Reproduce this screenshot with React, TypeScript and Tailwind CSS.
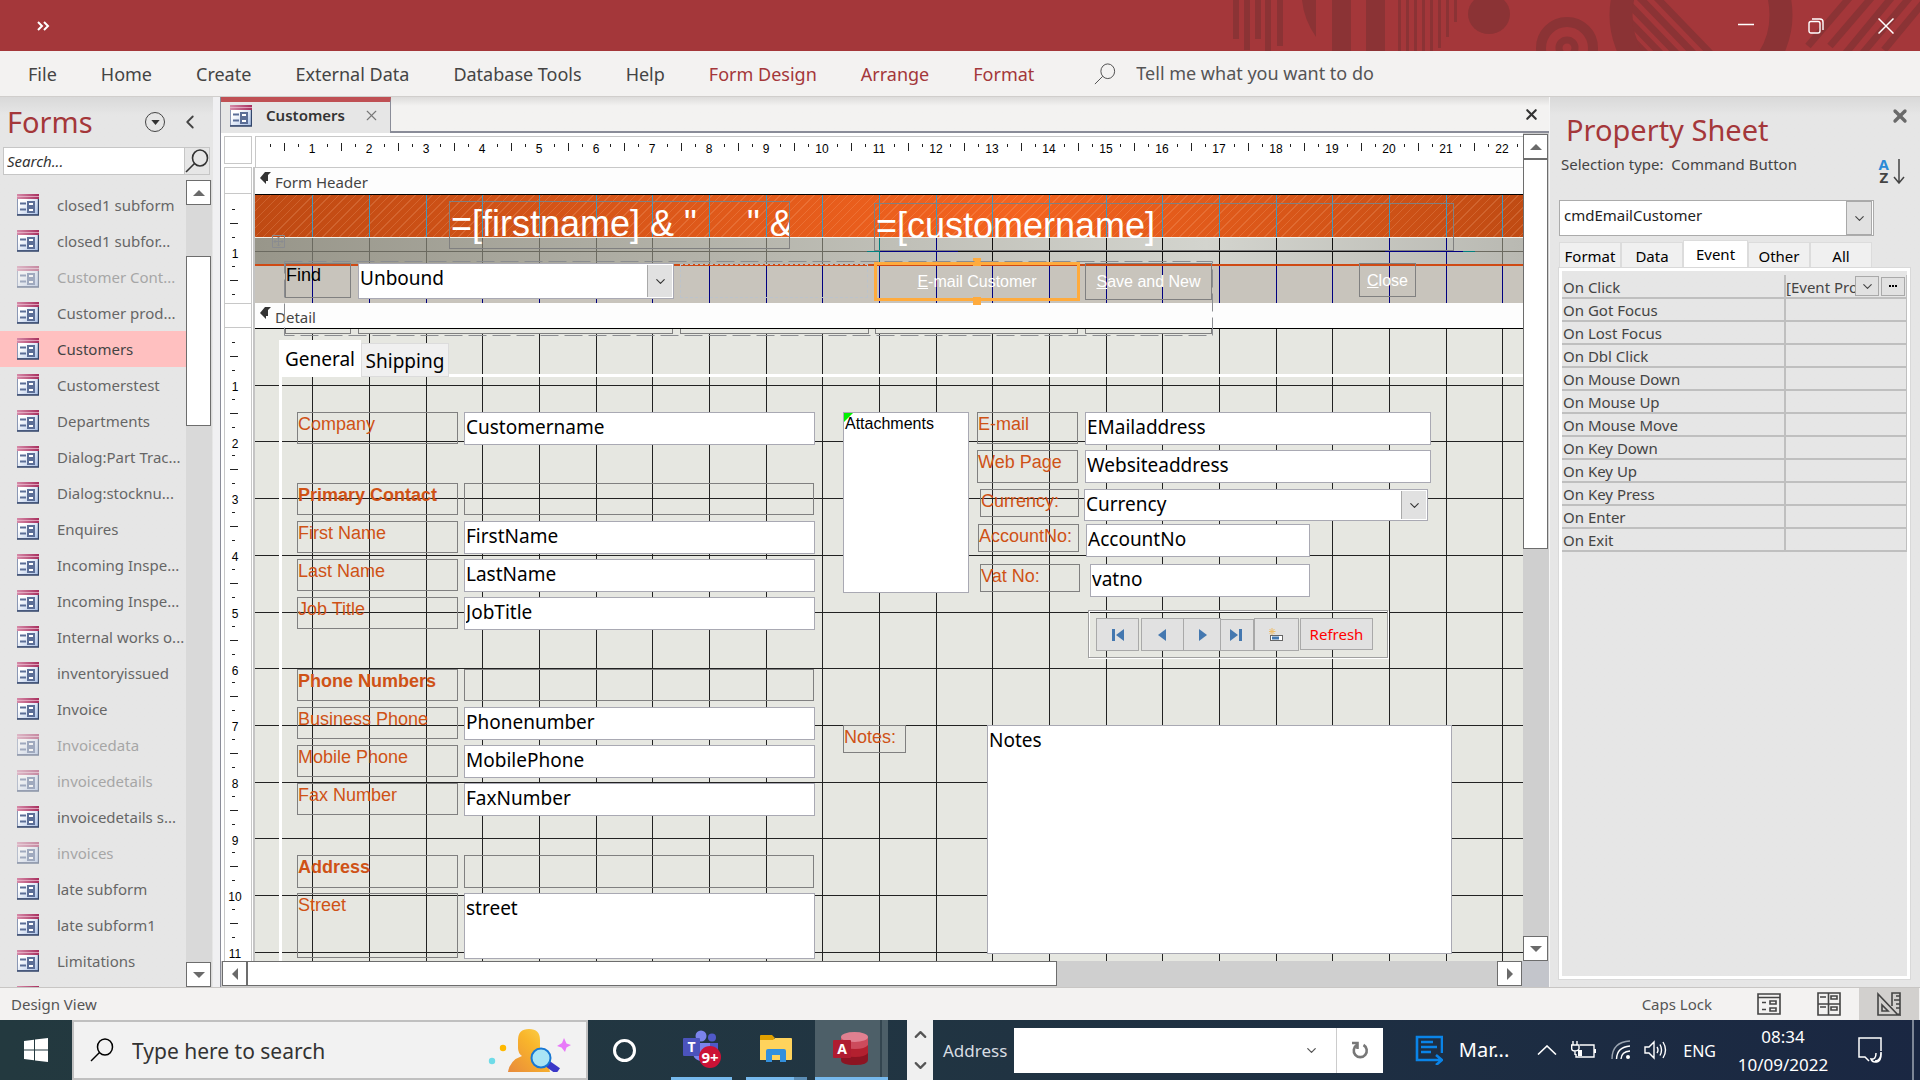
import { useState } from "react";
import type { ReactNode } from "react";
import { ChevronDown, ChevronLeft, ChevronUp, X } from "lucide-react";

// one centimetre on the design surface
const CM = 56.68;
const MARKS = Array.from({ length: 45 }, (_, i) => i + 1);

const menus = ["File", "Home", "Create", "External Data", "Database Tools", "Help"];
const designMenus = ["Form Design", "Arrange", "Format"];

const forms = [
  { name: "closed1 subform" },
  { name: "closed1 subfor..." },
  { name: "Customer Cont...", hidden: true },
  { name: "Customer prod..." },
  { name: "Customers" },
  { name: "Customerstest" },
  { name: "Departments" },
  { name: "Dialog:Part Trac..." },
  { name: "Dialog:stocknu..." },
  { name: "Enquires" },
  { name: "Incoming Inspe..." },
  { name: "Incoming Inspe..." },
  { name: "Internal works o..." },
  { name: "inventoryissued" },
  { name: "Invoice" },
  { name: "Invoicedata", hidden: true },
  { name: "invoicedetails", hidden: true },
  { name: "invoicedetails s..." },
  { name: "invoices", hidden: true },
  { name: "late subform" },
  { name: "late subform1" },
  { name: "Limitations" },
  { name: "" },
];

const events = [
  "On Click",
  "On Got Focus",
  "On Lost Focus",
  "On Dbl Click",
  "On Mouse Down",
  "On Mouse Up",
  "On Mouse Move",
  "On Key Down",
  "On Key Up",
  "On Key Press",
  "On Enter",
  "On Exit",
];

// controls of the detail section, measured from its top left corner
const labels = [
  { id: "company", text: "Company", x: 42, y: 83, w: 161, h: 32 },
  { id: "", text: "Primary Contact", x: 42, y: 154, w: 161, h: 32, bold: true },
  { id: "first", text: "First Name", x: 42, y: 192, w: 161, h: 32 },
  { id: "last", text: "Last Name", x: 42, y: 230, w: 161, h: 32 },
  { id: "job", text: "Job Title", x: 42, y: 268, w: 161, h: 32 },
  { id: "", text: "Phone Numbers", x: 42, y: 340, w: 161, h: 32, bold: true },
  { id: "business", text: "Business Phone", x: 42, y: 378, w: 161, h: 32 },
  { id: "mobile", text: "Mobile Phone", x: 42, y: 416, w: 161, h: 32 },
  { id: "fax", text: "Fax Number", x: 42, y: 454, w: 161, h: 32 },
  { id: "", text: "Address", x: 42, y: 526, w: 161, h: 33, bold: true },
  { id: "street", text: "Street", x: 42, y: 564, w: 161, h: 65 },
  { id: "email", text: "E-mail", x: 722, y: 83, w: 101, h: 32 },
  { id: "web", text: "Web Page", x: 722, y: 121, w: 101, h: 33 },
  { id: "currency", text: "Currency:", x: 725, y: 160, w: 99, h: 28 },
  { id: "account", text: "AccountNo:", x: 723, y: 195, w: 101, h: 28 },
  { id: "vat", text: "Vat No:", x: 725, y: 235, w: 100, h: 28 },
  { id: "notes", text: "Notes:", x: 588, y: 396, w: 63, h: 28 },
];

const fields = [
  { id: "company", text: "Customername", x: 209, y: 83, w: 351, h: 33 },
  { id: "first", text: "FirstName", x: 209, y: 192, w: 351, h: 33 },
  { id: "last", text: "LastName", x: 209, y: 230, w: 351, h: 33 },
  { id: "job", text: "JobTitle", x: 209, y: 268, w: 351, h: 33 },
  { id: "business", text: "Phonenumber", x: 209, y: 378, w: 351, h: 33 },
  { id: "mobile", text: "MobilePhone", x: 209, y: 416, w: 351, h: 33 },
  { id: "fax", text: "FaxNumber", x: 209, y: 454, w: 351, h: 33 },
  { id: "email", text: "EMailaddress", x: 830, y: 83, w: 346, h: 33 },
  { id: "web", text: "Websiteaddress", x: 830, y: 121, w: 346, h: 33 },
  { id: "account", text: "AccountNo", x: 831, y: 195, w: 224, h: 33 },
  { id: "vat", text: "vatno", x: 835, y: 235, w: 220, h: 33 },
];

const memos = [
  { id: "street", text: "street", x: 209, y: 564, w: 351, h: 66 },
  { id: "notes", text: "Notes", x: 732, y: 396, w: 465, h: 229 },
];

const emptyCells = [
  { x: 209, y: 154, w: 350, h: 32 },
  { x: 209, y: 340, w: 350, h: 32 },
  { x: 209, y: 526, w: 350, h: 33 },
];

// lower edge of the header layout that reaches into the detail section
const layoutFeet = [
  { x: 30, w: 66 },
  { x: 103, w: 315 },
  { x: 425, w: 189 },
  { x: 620, w: 203 },
  { x: 830, w: 127 },
];

const box = (o: { x: number; y: number; w: number; h: number }) => ({
  left: o.x,
  top: o.y,
  width: o.w,
  height: o.h,
});

const gridX = (n: number) => Math.round(n * CM + 0.5);
const gridY = (n: number) => Math.round(n * 56.7 - 1);

const FormIcon = ({ dim }: { dim?: boolean }) => (
  <svg viewBox="0 0 22 22" className={`w-[22px] h-[22px] shrink-0 ${dim ? "opacity-50" : ""}`}>
    <defs>
      <linearGradient id="formBody" x1="0" y1="0" x2="1" y2="1">
        <stop offset="0.3" stopColor="#ffffff" />
        <stop offset="1" stopColor="#a9c0e6" />
      </linearGradient>
      <linearGradient id="formTop" x1="0" y1="0" x2="1" y2="0">
        <stop offset="0" stopColor="#d68aa8" />
        <stop offset="1" stopColor="#a82f5e" />
      </linearGradient>
    </defs>
    <rect x="0.5" y="0.5" width="21" height="20" fill="url(#formBody)" stroke="#8a97b5" />
    <rect x="0" y="0" width="22" height="5" fill="url(#formTop)" />
    <path d="M0 2.5H22" stroke="#e9b8cb" strokeWidth="0.8" />
    <path d="M3 9.5H9M3 15.5H9" stroke="#5b6e97" strokeWidth="2" />
    <rect x="11" y="8" width="6" height="4" fill="#fff" stroke="#5b6e97" strokeWidth="2" />
    <rect x="11" y="14" width="6" height="4" fill="#fff" stroke="#5b6e97" strokeWidth="2" />
    <path d="M0 21H22M21.5 5V21" stroke="#33466b" strokeWidth="1.4" fill="none" />
  </svg>
);

const SearchIcon = ({ className }: { className: string }) => (
  <svg viewBox="0 0 24 24" className={className} fill="none" stroke="currentColor">
    <ellipse cx="15" cy="9" rx="7.5" ry="8" />
    <path d="M9.5 14.5L1 23" />
  </svg>
);

const Arrow = ({ d }: { d: string }) => (
  <svg viewBox="0 0 12 12" className="w-3 h-3" fill="#6a6a6a">
    <path d={d} />
  </svg>
);

const ScrollButton = ({ label, d }: { label: string; d: string }) => (
  <button
    aria-label={label}
    className="w-[25px] h-[25px] shrink-0 flex items-center justify-center bg-white border border-[#6d6d6d]"
  >
    <Arrow d={d} />
  </button>
);

const UP = "M0 9L6 3L12 9Z";
const DOWN = "M0 3L12 3L6 9Z";
const LEFT = "M9 0V12L3 6Z";
const RIGHT = "M3 0V12L9 6Z";

const TitleBar = () => (
  <header className="relative h-[51px] shrink-0 bg-[#a4373a] flex items-center justify-between text-white">
    <svg viewBox="0 0 700 51" className="absolute right-0 top-0 w-[700px] h-[51px]" fill="#8b3335">
      <defs>
        <clipPath id="lens">
          <circle cx="481" cy="15" r="69" />
        </clipPath>
      </defs>
      <path d="M13 0h6v39h-6zM24 0h6v50h-6zM35 0h6v39h-6zM45 0h6v51h-6zM57 0h6v46h-6z" />
      <path d="M82 0H96V37Q84 20 82 0ZM112 0h19v51h-19zM146 0h19v51h-19z" />
      <path d="M178 0h3v51h-3zM186 0h3v51h-3zM194 0h3v51h-3zM202 0h3v51h-3zM210 0h3v51h-3zM218 0h3v48h-3zM226 0h3v37h-3zM234 0h3v22h-3z" />
      <ellipse cx="269" cy="14" rx="21" ry="20" />
      <g fill="none" stroke="#8b3335">
        <circle cx="347" cy="48" r="26" strokeWidth="10" />
        <circle cx="347" cy="48" r="8" strokeWidth="7" />
        <circle cx="481" cy="15" r="80" strokeWidth="23" />
        <g strokeWidth="7" clipPath="url(#lens)">
          <path d="M436 -3L491 54M419 -3L474 54M402 -3L457 54M386 -3L441 54M371 -3L426 54" />
        </g>
        <g strokeWidth="7">
          <path d="M588 46L630 -3M610 46L652 -3M625 54L672 -3M642 54L690 -3M664 50L708 -3" />
        </g>
      </g>
    </svg>
    <button aria-label="More commands" className="ml-[35px] h-full">
      <svg viewBox="0 0 16 12" className="w-4 h-3" fill="none" stroke="white" strokeWidth="2">
        <path d="M3 2L7 6L3 10M9 2L13 6L9 10" />
      </svg>
    </button>
    <div className="relative flex items-center gap-[54px] pr-[26px]">
      <button aria-label="Minimize">
        <svg viewBox="0 0 16 16" className="w-4 h-4" fill="none" stroke="white" strokeWidth="1.5">
          <path d="M0 6.5H16" />
        </svg>
      </button>
      <button aria-label="Restore">
        <svg viewBox="0 0 16 16" className="w-4 h-4" fill="none" stroke="white" strokeWidth="1.4">
          <rect x="1" y="3.5" width="11" height="11.5" rx="2" />
          <path d="M4 1H12Q15 1 15 4V12" />
        </svg>
      </button>
      <button aria-label="Close window">
        <svg viewBox="0 0 16 16" className="w-4 h-4" fill="none" stroke="white" strokeWidth="1.5">
          <path d="M0.5 0.5L15.5 15.5M15.5 0.5L0.5 15.5" />
        </svg>
      </button>
    </div>
  </header>
);

const Ribbon = () => (
  <nav className="h-[46px] shrink-0 bg-[#f3f2f1] border-b border-[#d0cecc] flex items-center gap-11 pl-7 pt-[2px] text-[18px] text-[#444444]">
    {menus.map((m) => (
      <button key={m}>{m}</button>
    ))}
    {designMenus.map((m) => (
      <button key={m} className="text-[#a4373a]">
        {m}
      </button>
    ))}
    <label className="flex flex-1 items-center gap-5 pl-4 pb-[2px]">
      <SearchIcon className="w-[22px] h-[22px]" />
      <input
        placeholder="Tell me what you want to do"
        className="flex-1 bg-transparent outline-none placeholder:text-[#555555]"
      />
    </label>
  </nav>
);

const NavigationPane = () => {
  const [selected, setSelected] = useState("Customers");

  return (
    <aside className="w-[213px] shrink-0 flex flex-col bg-gradient-to-b from-[#d9d9d9] to-[#e6e6e6] to-2%">
      <div className="flex items-center h-[50px] pl-[7px]">
        <h2 className="flex-1 text-[29px] text-[#a4373a]">Forms</h2>
        <button
          aria-label="Choose object list"
          className="w-5 h-5 mr-[14px] rounded-full border border-[#444444] flex items-center justify-center"
        >
          <svg viewBox="0 0 10 6" className="w-[9px] h-[5px]" fill="#333333">
            <path d="M0 0H10L5 6Z" />
          </svg>
        </button>
        <button aria-label="Collapse pane" className="mr-3 text-[#444444]">
          <ChevronLeft size={22} strokeWidth={2} />
        </button>
      </div>
      <div className="flex h-7 ml-[3px] w-[207px] border border-[#c6c6c6]">
        <input
          aria-label="Search forms"
          placeholder="Search..."
          className="w-[181px] bg-white pl-[3px] text-[15px] italic outline-none placeholder:text-[#333333] border-r border-[#c6c6c6]"
        />
        <button aria-label="Search" className="flex-1 text-[#333333]">
          <SearchIcon className="w-6 h-6 stroke-[1.6]" />
        </button>
      </div>
      <div className="flex flex-1 min-h-0 mt-[5px]">
        <ul className="flex-1 min-w-0 overflow-hidden pt-[7px]">
          {forms.map((f, i) => (
            <li key={i}>
              <button
                onClick={() => setSelected(f.name)}
                className={`flex items-center gap-[18px] w-full h-9 pl-[17px] text-[15px] whitespace-nowrap ${
                  selected === f.name ? "bg-[#ffc0c0] text-[#444444]" : f.hidden ? "text-[#a6a6a6]" : "text-[#666666]"
                }`}
              >
                <FormIcon dim={f.hidden} />
                {f.name}
              </button>
            </li>
          ))}
        </ul>
        <div className="w-[26px] flex flex-col bg-[#d9d9d9] mr-px">
          <ScrollButton label="Scroll forms up" d={UP} />
          <div className="h-[51px]" />
          <div className="w-[25px] h-[170px] bg-white border border-[#6d6d6d]" />
          <div className="flex-1" />
          <ScrollButton label="Scroll forms down" d={DOWN} />
        </div>
      </div>
    </aside>
  );
};

const HorizontalRuler = () => (
  <div className="flex h-[34px] shrink-0 gap-[6px] pl-[3px] pt-[3px] bg-white">
    <div className="w-7 h-7 border border-[#c8c8c8]" />
    <svg className="flex-1 h-8 border border-r-0 border-[#c8c8c8] -ml-[3px]">
      {MARKS.map((n) => {
        const x = gridX(n) - 1;
        return (
          <g key={n}>
            {n <= 22 && (
              <text x={x} y="16" textAnchor="middle" className="text-[12px] font-['Liberation_Sans',sans-serif]">
                {n}
              </text>
            )}
            <path
              d={`M${x - 42} 7v3M${x - 28} 6v8M${x - 14} 7v3`}
              transform="translate(0.5 0)"
              stroke="#222222"
            />
          </g>
        );
      })}
    </svg>
  </div>
);

// vertical ruler that runs beside one section, numbered up to its last full centimetre
const SectionRuler = ({ first, last, className }: { first: number; last: number; className: string }) => (
  <svg className={`w-7 block ${className}`}>
    {MARKS.slice(0, 20).map((n) => {
      const y = first + Math.round((n - 1) * 56.7);
      return (
        <g key={n}>
          <path d={`M7 ${y - 43.5}h3M5 ${y - 29.5}h8M7 ${y - 15.5}h3`} stroke="#222222" />
          {n <= last && (
            <text x="10" y={y + 5} textAnchor="middle" className="text-[12px] font-['Liberation_Sans',sans-serif]">
              {n}
            </text>
          )}
        </g>
      );
    })}
  </svg>
);

const SectionBar = ({ title, className }: { title: string; className: string }) => (
  <div className={`flex items-center bg-[#fdfdfd] border-b border-black pl-[5px] text-[15px] leading-[22px] text-[#444444] ${className}`}>
    <svg viewBox="0 0 12 12" className="w-3 h-3 mr-[3px] -mt-2" fill="#333333">
      <path d="M0 6L5 0H11L8 3V9H6V12Z" />
    </svg>
    {title}
  </div>
);

const HeaderGrid = () => (
  <svg className="absolute inset-0 w-full h-full" shapeRendering="crispEdges">
    {MARKS.map((n) => {
      const x = gridX(n);
      const middle = n < 11 || n > 21 ? "#6b6a60" : n === 11 ? "#008080" : n > 12 && n < 20 ? "#111111" : "#000080";
      return (
        <g key={n}>
          <path d={`M${x} 0V42`} stroke="#3f97c0" />
          <path d={`M${x} 43V69`} stroke={middle} />
          <path d={`M${x} 71V108`} stroke="#000080" />
        </g>
      );
    })}
    <path d="M0 56.5H612M1220 56.5H3000" stroke="#6b6a60" />
    <path d="M612 56.5H625M1208 56.5H1220" stroke="#008080" />
    <path d="M625 56.5H703M1130 56.5H1208" stroke="#000080" />
    <path d="M703 56.5H1130" stroke="#111111" />
  </svg>
);

const DetailGrid = () => (
  <svg className="absolute inset-0 w-full h-full" shapeRendering="crispEdges" stroke="#222222">
    {MARKS.map((n) => (
      <path key={n} d={`M${gridX(n)} 0V2000`} />
    ))}
    {MARKS.map((n) => (
      <path key={n} d={`M0 ${gridY(n)}.5H3000`} />
    ))}
  </svg>
);

const HeaderSection = () => (
  <div className="relative h-[108px] shrink-0 overflow-hidden bg-[#c8c4bc]">
    <div className="h-[42px] bg-[repeating-linear-gradient(135deg,transparent_0_5px,rgba(255,190,150,0.2)_5px_6px),linear-gradient(90deg,#bf4a13,#f4631f_60%,#c04b13)]" />
    <div className="h-px bg-[#f4efe6]" />
    <div className="h-[26px] bg-gradient-to-r from-[#98968a] via-[#d3d4ce] via-75% to-[#b9b9b2]" />
    <div className="h-[2px] bg-[#cf4a14]" />
    <HeaderGrid />
    <div className="absolute left-[194px] top-[6px] w-[341px] h-[48px] overflow-hidden whitespace-pre border border-[#808080] pl-px pt-[2px] text-[36px] leading-[40px] text-white font-['Liberation_Sans',sans-serif]">
      {'=[firstname] & "     " &'}
    </div>
    <div className="absolute left-[619px] top-[8px] w-[580px] h-[48px] border border-[#808080] pl-px pt-[2px] text-[36px] leading-[40px] text-white font-['Liberation_Sans',sans-serif]">
      =[customername]
    </div>
    <svg viewBox="0 0 13 13" className="absolute left-[17px] top-[40px] w-[13px] h-[13px]" fill="none" stroke="#8a8c90">
      <path d="M0.5 0.5H12.5V12.5H0.5ZM6.5 2V11M2 6.5H11M5 3.5L6.5 2L8 3.5M5 9.5L6.5 11L8 9.5M3.5 5L2 6.5L3.5 8M9.5 5L11 6.5L9.5 8" />
    </svg>
    <label
      htmlFor="find"
      className="absolute left-[30px] top-[68px] w-[66px] h-[35px] border border-[#808080] text-[18px] leading-[22px] text-black font-['Liberation_Sans',sans-serif]"
    >
      Find
    </label>
    <div className="absolute left-[103px] top-[68px] w-[316px] h-9">
      <select id="find" className="w-full h-full appearance-none bg-white border border-[#a9a9b3] pl-px pb-[6px] text-[19px]">
        <option>Unbound</option>
      </select>
      <DropMark />
    </div>
    <div className="absolute left-[425px] top-[69px] w-[188px] h-[34px] border border-dashed border-[#bcc3ca]" />
    <button className="absolute left-[619px] top-[67px] w-[206px] h-[39px] border-[3px] border-[#ffab3d] pt-px text-[16px] text-white font-['Liberation_Sans',sans-serif]">
      <u>E</u>-mail Customer
    </button>
    <div className="absolute left-[718px] top-[63px] w-2 h-2 bg-[#ffab3d]" />
    <button className="absolute left-[830px] top-[68px] w-[127px] h-[37px] border border-[#808080] pt-px text-[16px] text-white font-['Liberation_Sans',sans-serif]">
      <u>S</u>ave and New
    </button>
    <button className="absolute left-[1104px] top-[68px] w-[57px] h-[34px] border border-[#808080] pt-px text-[16px] text-white font-['Liberation_Sans',sans-serif]">
      <u>C</u>lose
    </button>
  </div>
);

const DropMark = () => (
  <span className="absolute right-[2px] top-[2px] bottom-[2px] w-[25px] bg-[#e1e1e1] border-l border-[#a9a9a9] flex items-center justify-center pointer-events-none">
    <ChevronDown size={15} strokeWidth={1.8} color="#333333" />
  </span>
);

const RecordButton = ({ label, o, children }: { label: string; o: any; children: ReactNode }) => (
  <button
    aria-label={label}
    className="absolute flex items-center justify-center bg-[#e1e1e1] border border-[#a9a9a9] text-[15px] text-[#ff0000]"
    style={box(o)}
  >
    {children}
  </button>
);

const RecordIcon = ({ d }: { d: string }) => (
  <svg viewBox="0 0 14 12" className="w-[14px] h-3" fill="#4478b0">
    <path d={d} />
  </svg>
);

const DetailSection = () => (
  <div className="relative flex-1 min-h-0 overflow-hidden bg-[#e6e7e1]">
    <DetailGrid />
    {layoutFeet.map((f) => (
      <div
        key={f.x}
        className="absolute top-0 h-[5px] border border-t-0 border-[#808080] bg-[#e6e7e1]"
        style={{ left: f.x, width: f.w }}
      />
    ))}

    {/* tab control */}
    <div className="absolute left-[24px] top-[45px] w-[3000px] h-[2000px] border-t-[3px] border-l-[3px] border-white" />
    <div className="absolute left-[24px] top-[11px] flex items-start text-[19px] leading-[26px] text-black">
      <button className="w-[82px] h-[37px] bg-white">General</button>
      <button className="w-[88px] h-[34px] mt-[3px] pt-px bg-[#f0f0f0] border border-[#dcdcdc]">Shipping</button>
    </div>

    {labels.map((l) => (
      <label
        key={l.text}
        htmlFor={l.id || undefined}
        className={`absolute border border-[#808080] whitespace-nowrap text-[18px] leading-[22px] text-[#cf5216] font-['Liberation_Sans',sans-serif] ${
          l.bold ? "font-bold" : ""
        }`}
        style={box(l)}
      >
        {l.text}
      </label>
    ))}
    {emptyCells.map((c) => (
      <div key={c.y} className="absolute border border-[#808080]" style={box(c)} />
    ))}
    {fields.map((f) => (
      <input
        key={f.id}
        id={f.id}
        defaultValue={f.text}
        className="absolute bg-white border border-[#a9a9b3] pl-px pb-[3px] text-[19px] text-black"
        style={box(f)}
      />
    ))}
    {memos.map((m) => (
      <textarea
        key={m.id}
        id={m.id}
        defaultValue={m.text}
        className="absolute resize-none bg-white border border-[#a9a9b3] pl-px text-[19px] leading-[28px] text-black"
        style={box(m)}
      />
    ))}
    <div className="absolute left-[829px] top-[160px] w-[344px] h-8">
      <select
        id="currency"
        className="w-full h-full appearance-none bg-white border border-[#a9a9b3] pl-px pb-[2px] text-[19px] text-black"
      >
        <option>Currency</option>
      </select>
      <DropMark />
    </div>

    <div className="absolute left-[588px] top-[83px] w-[126px] h-[181px] bg-white border border-[#a9a9b3] pl-px text-[16px] leading-[22px] text-black font-['Liberation_Sans',sans-serif]">
      <svg viewBox="0 0 9 9" className="absolute left-0 top-0 w-[9px] h-[9px]" fill="#00f000">
        <path d="M0 0H9L0 9Z" />
      </svg>
      <span className="relative">Attachments</span>
    </div>

    {/* record navigation */}
    <div className="absolute left-[833px] top-[281px] w-[300px] h-[48px] border border-[#a0a0a0] shadow-[1px_1px_0_#ffffff,inset_1px_1px_0_#ffffff]" />
    <RecordButton label="First record" o={{ x: 841, y: 289, w: 43, h: 33 }}>
      <RecordIcon d="M1 0H4V12H1ZM13 0V12L5 6Z" />
    </RecordButton>
    <RecordButton label="Previous record" o={{ x: 886, y: 289, w: 43, h: 33 }}>
      <RecordIcon d="M10 0V12L2 6Z" />
    </RecordButton>
    <RecordButton label="Next record" o={{ x: 928, y: 289, w: 38, h: 33 }}>
      <RecordIcon d="M4 0V12L12 6Z" />
    </RecordButton>
    <RecordButton label="Last record" o={{ x: 965, y: 290, w: 34, h: 32 }}>
      <RecordIcon d="M0 0V12L8 6ZM9 0H12V12H9Z" />
    </RecordButton>
    <RecordButton label="New record" o={{ x: 999, y: 289, w: 45, h: 33 }}>
      <svg viewBox="0 0 16 14" className="w-4 h-[14px]" fill="none">
        <path d="M3 0V7M-0.5 3.5H6.5M0.5 1L5.5 6M5.5 1L0.5 6" stroke="#eebd6b" />
        <rect x="1.5" y="7.5" width="12" height="5" fill="#ffffff" stroke="#666666" />
        <path d="M3 10H10" stroke="#4478b0" strokeWidth="3" />
      </svg>
    </RecordButton>
    <RecordButton label="Refresh" o={{ x: 1045, y: 289, w: 73, h: 32 }}>
      Refresh
    </RecordButton>
  </div>
);

const FormDesigner = () => (
  <main className="flex-1 min-w-0 flex flex-col border-l border-[#8a8c98] bg-white">
    <div className="flex h-9 shrink-0 bg-gradient-to-b from-[#dddcdb] to-[#f3f2f1] to-25%">
      <div className="flex items-center w-[170px] pl-[9px] pb-1 bg-[#e6e6e6] border-t-[5px] border-t-[#bf5054] border-r border-r-[#8a8c98]">
        <FormIcon />
        <span className="pl-[14px] text-[15px] font-semibold text-[#333333]">Customers</span>
        <button aria-label="Close Customers" className="pl-[18px] text-[#777777]">
          <X size={17} strokeWidth={1.6} />
        </button>
      </div>
      <div className="flex flex-1 items-center justify-end pr-[9px] border-b-2 border-[#8a8c98]">
        <button aria-label="Close designer" className="text-[#333333]">
          <X size={17} strokeWidth={3} />
        </button>
      </div>
    </div>

    <div className="flex flex-1 min-h-0">
      <div className="flex-1 min-w-0 flex flex-col">
        <HorizontalRuler />
        <div className="flex flex-1 min-h-0">
          <div className="flex flex-col w-[34px] shrink-0 pl-[3px] border-r-2 border-[#c4c4c4] overflow-hidden">
            <div className="w-7 h-[27px] shrink-0 border border-[#c8c8c8]" />
            <SectionRuler first={59} last={1} className="h-[109px] shrink-0 border-x border-[#c8c8c8]" />
            <div className="w-7 h-[25px] shrink-0 border border-[#c8c8c8]" />
            <SectionRuler first={58} last={11} className="flex-1 min-h-0 border-x border-[#c8c8c8]" />
          </div>
          <div className="relative flex-1 min-w-0 flex flex-col overflow-hidden">
            <SectionBar title="Form Header" className="h-7 pt-[2px] shrink-0 border-t border-t-[#c8c8c8]" />
            <HeaderSection />
            <SectionBar title="Detail" className="h-[26px] pt-[2px] shrink-0" />
            <DetailSection />
            {/* outline of the selected layout, drawn across both sections */}
            <svg
              viewBox="0 0 929 75"
              className="absolute left-[29px] top-[94px] w-[929px] h-[75px] pointer-events-none"
              fill="none"
              stroke="#8a8c90"
              strokeDasharray="18 6"
            >
              <path d="M0.5 0.5H928.5V74.5H0.5Z" />
            </svg>
            <div className="absolute left-[718px] top-[130px] w-2 h-2 bg-[#ffab3d]" />
          </div>
        </div>
      </div>
      <div className="flex flex-col w-[26px] shrink-0 pt-px bg-[#cfcfcf]">
        <ScrollButton label="Scroll up" d={UP} />
        <div className="w-[25px] h-[390px] bg-white border border-[#6d6d6d]" />
        <div className="flex-1" />
        <ScrollButton label="Scroll down" d={DOWN} />
      </div>
    </div>

    <div className="flex h-[26px] shrink-0 bg-[#cfcfcf] pl-px">
      <ScrollButton label="Scroll left" d={LEFT} />
      <div className="w-[810px] h-[25px] bg-white border border-[#6d6d6d]" />
      <div className="flex-1" />
      <ScrollButton label="Scroll right" d={RIGHT} />
      <div className="w-[27px] bg-[#c3c5cb]" />
    </div>
  </main>
);

const PropertySheet = () => {
  const [tab, setTab] = useState("Event");

  return (
    <aside className="w-[371px] shrink-0 flex flex-col bg-gradient-to-b from-[#d9d9d9] to-[#e6e6e6] to-2% border-l border-[#f5f5f5] pl-[9px] pr-[10px] pb-2 text-[15px] text-[#444444]">
      <div className="flex items-start justify-between pt-[9px] h-[57px]">
        <h2 className="pl-[7px] pt-1 text-[29px] leading-[40px] text-[#a4373a]">Property Sheet</h2>
        <button aria-label="Close property sheet" className="text-[#6a6a6a]">
          <X size={20} strokeWidth={4} />
        </button>
      </div>
      <div className="flex justify-between h-[46px] pr-[5px]">
        <p className="pl-[2px] leading-[21px] whitespace-pre">Selection type:  Command Button</p>
        <button aria-label="Sort" className="flex h-[26px] mt-1 gap-1">
          <span className="flex flex-col text-[15px] leading-[13px] font-bold">
            <span className="text-[#2b8ad6]">A</span>
            <span>Z</span>
          </span>
          <svg viewBox="0 0 12 26" className="w-3 h-[26px]" fill="none" stroke="#444444" strokeWidth="1.5">
            <path d="M6 1V25M1 19L6 25L11 19" />
          </svg>
        </button>
      </div>
      <div className="relative w-[315px] h-9 shrink-0">
        <select
          aria-label="Selected control"
          className="w-full h-full appearance-none bg-white border border-[#ababab] pl-1 pb-[6px] text-[15px] text-[#222222]"
        >
          <option>cmdEmailCustomer</option>
        </select>
        <span className="absolute right-[2px] top-[1px] bottom-[1px] w-[26px] bg-[#e1e1e1] border border-[#a9a9a9] flex items-center justify-center pointer-events-none">
          <ChevronDown size={15} strokeWidth={1.8} />
        </span>
      </div>
      <div className="flex items-end h-8 shrink-0 text-black">
        {["Format", "Data", "Event", "Other", "All"].map((t) => (
          <button
            key={t}
            onClick={() => setTab(t)}
            className={`border border-b-0 border-[#dcdcdc] ${
              t === tab ? "w-[65px] h-[28px] bg-white" : "w-[62px] h-[26px] pt-px bg-[#f0f0f0]"
            }`}
          >
            {t}
          </button>
        ))}
      </div>
      <div className="flex-1 border-[3px] border-white pt-1 shadow-[0_0_0_1px_#d9d9d9]">
        <table className="w-full table-fixed border-collapse">
          <tbody>
            {events.map((e) => (
              <tr key={e} className="h-[23px] border-b-2 border-[#bfbfbf]">
                <th scope="row" className="w-[223px] p-0 pt-px pl-px border-r-2 border-[#bfbfbf] text-left font-normal leading-[20px]">
                  {e}
                </th>
                <td className="p-0 border-r border-[#bfbfbf]">
                  {e === "On Click" && (
                    <div className="flex items-center h-[21px] gap-[2px] pr-px">
                      <span className="flex-1 overflow-hidden whitespace-nowrap pt-px leading-[20px]">[Event Procedure]</span>
                      <button
                        aria-label="Choose event handler"
                        className="w-[24px] h-[20px] -ml-[2px] shrink-0 border border-[#a9a9a9] bg-[#e1e1e1] flex items-center justify-center"
                      >
                        <ChevronDown size={15} strokeWidth={1.8} />
                      </button>
                      <button
                        aria-label="Build"
                        className="w-[24px] h-[19px] shrink-0 border border-[#a9a9a9] bg-[#e1e1e1] flex items-center justify-center gap-px"
                      >
                        <i className="w-[2px] h-[2px] bg-black" />
                        <i className="w-[2px] h-[2px] bg-black" />
                        <i className="w-[2px] h-[2px] bg-black" />
                      </button>
                    </div>
                  )}
                </td>
              </tr>
            ))}
          </tbody>
        </table>
      </div>
    </aside>
  );
};

const StatusBar = () => (
  <footer className="h-[33px] shrink-0 flex items-center border-t border-[#c8c6c4] bg-[#f3f2f1] pl-[11px] text-[15px] text-[#555555]">
    <span className="flex-1">Design View</span>
    <span className="pr-[27px]">Caps Lock</span>
    <button aria-label="Form view" className="w-[60px] h-full flex items-center justify-center">
      <svg viewBox="0 0 24 22" className="w-6 h-[22px]" fill="none" stroke="#444444" strokeWidth="1.6">
        <path d="M1 1H23V21H1ZM1 4.5H23M5 9.5H9M5 16.5H9" />
        <path d="M13 8H19V11H13ZM13 15H19V18H13Z" />
      </svg>
    </button>
    <button aria-label="Layout view" className="w-[60px] h-full flex items-center justify-center">
      <svg viewBox="0 0 24 24" className="w-6 h-6" fill="none" stroke="#444444" strokeWidth="1.6">
        <path d="M1 1H23V23H1ZM1 12H23M11.5 1V23M3 5H9M3 15H9" />
        <path d="M14 4H20V7H14ZM14 15H20V18H14Z" />
      </svg>
    </button>
    <button aria-label="Design view" className="w-[60px] h-full mr-px flex items-center justify-center bg-[#d2d0ce]">
      <svg viewBox="0 0 24 24" className="w-6 h-6" fill="none" stroke="#444444" strokeWidth="1.6">
        <path d="M1 2V23H21ZM5 13V19H11Z" />
        <path d="M15 14V1H23V23L21 22M23 4H19M23 8H17M23 12H19M23 16H19" />
      </svg>
    </button>
  </footer>
);

const Taskbar = () => (
  <footer className="h-[60px] shrink-0 flex bg-gradient-to-r from-[#23393f] via-[#213542] via-45% to-[#1a2742] text-white">
    <button aria-label="Start" className="w-[72px] shrink-0 flex items-center justify-center">
      <svg viewBox="0 0 24 24" className="w-6 h-6" fill="white">
        <path d="M0 3L10 1.7V11.4H0ZM11 1.5L24 0V11.4H11ZM0 12.5H10V22.3L0 21ZM11 12.5H24V24L11 22.4Z" />
      </svg>
    </button>
    <label className="w-[516px] shrink-0 flex items-center pl-4 gap-[18px] border-2 border-[#c0c0c0] bg-[#f2f2f2] text-black">
      <SearchIcon className="w-6 h-6 stroke-[1.5]" />
      <input
        placeholder="Type here to search"
        className="flex-1 bg-transparent pt-1 text-[21px] outline-none placeholder:text-[#333333]"
      />
      <svg viewBox="0 0 84 44" className="w-[84px] h-11 mr-[14px]">
        <defs>
          <linearGradient id="person" x1="0" y1="1" x2="1" y2="0">
            <stop offset="0" stopColor="#e88a3c" />
            <stop offset="0.6" stopColor="#f9b52b" />
            <stop offset="1" stopColor="#fbd64e" />
          </linearGradient>
        </defs>
        <circle cx="15" cy="20" r="3.2" fill="#ffb900" />
        <circle cx="4" cy="33" r="3.2" fill="#6fdbe8" />
        <path d="M30 12Q30 1 41 1Q52 1 52 12V20Q52 25 48 28Q60 32 62 44H20Q22 32 34 28Q30 25 30 20Z" fill="url(#person)" />
        <path d="M60 36L70 43" stroke="#3a37c8" strokeWidth="7" />
        <circle cx="53" cy="30" r="9.5" fill="#a9e4f5" stroke="#1778d4" strokeWidth="2" />
        <path d="M76 10L78.5 15.5L83 17L78.5 19.5L77 24L73.5 19.5L69 18L74 15Z" fill="#e879f9" />
      </svg>
    </label>
    <button aria-label="Cortana" className="w-[72px] shrink-0 flex items-center justify-center">
      <span className="w-[23px] h-[23px] rounded-full border-[3px] border-white" />
    </button>
    <button aria-label="Teams" className="w-[61px] shrink-0 ml-[11px] flex items-center justify-center border-b-[3px] border-[#76b9ed]">
      <svg viewBox="0 0 40 38" className="w-10 h-[38px]">
        <circle cx="19" cy="6" r="5.5" fill="#7b83eb" />
        <circle cx="30" cy="7.5" r="4" fill="#5059c9" />
        <path d="M11 13H36V20Q36 30 24 31H18Q11 29 11 22Z" fill="#5059c9" />
        <path d="M18 13H28V26Q26 31 20 31Q12 30 11 24Z" fill="#7b83eb" />
        <rect x="1" y="8" width="17" height="18" rx="1" fill="#4b53bc" />
        <text x="9.5" y="22" textAnchor="middle" fontSize="14" fontWeight="700" fill="white">T</text>
        <circle cx="28" cy="27" r="11" fill="#cc1236" />
        <text x="28" y="33" textAnchor="middle" fontSize="15" fontWeight="700" fill="white">9+</text>
      </svg>
    </button>
    <button aria-label="File Explorer" className="w-12 shrink-0 ml-[14px] flex items-center pl-[14px] border-b-[3px] border-[#76b9ed]">
      <svg viewBox="0 0 32 27" className="w-8 h-[27px] shrink-0">
        <path d="M0 1Q0 0 1 0H12L15 3H14V6H0Z" fill="#e0a000" />
        <path d="M0 5H13L15 3H31Q32 3 32 4V24Q32 25 31 25H0Z" fill="#ffd35c" />
        <path d="M6 27V16Q6 14 8 14H24Q26 14 26 16V27H20V20H12V27Z" fill="#3390dd" />
      </svg>
    </button>
    <div className="w-[13px] shrink-0 border-b-[3px] border-[#5b8db5]" />
    <button aria-label="Access" className="w-[73px] shrink-0 ml-2 flex items-center pl-[18px] bg-[#4d5f68] border-b-[3px] border-[#76b9ed]">
      <svg viewBox="0 0 36 36" className="w-9 h-9">
        <path d="M8 6V29Q8 34 22 34Q35 34 35 29V6Z" fill="#8c1422" />
        <path d="M8 6V22Q12 26 22 26Q32 26 35 22V6Z" fill="#b3202f" />
        <path d="M8 6V14Q12 18 22 18Q32 18 35 14V6Z" fill="#cc4b5c" />
        <ellipse cx="21.5" cy="6" rx="13.5" ry="5" fill="#e08090" />
        <rect x="0" y="9" width="18" height="18" rx="1" fill="#b01c30" />
        <text x="9" y="23" textAnchor="middle" fontSize="14" fontWeight="700" fill="white">A</text>
      </svg>
      <span className="ml-auto mr-[6px] w-[2px] h-full bg-[#33454f]" />
    </button>
    <div className="w-[26px] shrink-0 ml-[19px] flex flex-col items-center justify-between py-[5px] bg-[#f0f0f0] text-[#555555]">
      <ChevronUp size={19} strokeWidth={2.8} />
      <ChevronDown size={19} strokeWidth={2.8} />
    </div>
    <label htmlFor="address" className="self-center pl-[10px] pt-[2px] w-[81px] shrink-0 text-[17px] text-[#d8dde2]">
      Address
    </label>
    <div className="flex flex-1 self-center h-[45px] bg-white text-[#555555]">
      <input id="address" className="flex-1 min-w-0 outline-none text-[17px] px-2" />
      <button aria-label="Address history" className="w-[50px] flex items-center justify-center border-r border-[#cccccc]">
        <ChevronDown size={15} strokeWidth={2} />
      </button>
      <button aria-label="Reload" className="w-[46px] flex items-center justify-center">
        <svg viewBox="0 0 18 18" className="w-[18px] h-[18px]" fill="none" stroke="#777777" strokeWidth="2.6">
          <path d="M6 4A6.5 6.500 0 1 0 12.500 4M1 2H6.500V8" />
        </svg>
      </button>
    </div>
    <button className="flex items-center gap-4 ml-8 text-[20px]">
      <svg viewBox="0 0 28 30" className="w-7 h-[30px]" fill="none" stroke="#0a84e8" strokeWidth="2.6">
        <path d="M27 18V2H2V25H18M6 7H18M6 12H22M6 17H16M13 25H26M21 20L27 25L21 30" />
      </svg>
      Mar...
    </button>
    <button aria-label="Hidden icons" className="ml-7">
      <svg viewBox="0 0 20 10" className="w-5 h-[10px]" fill="none" stroke="white" strokeWidth="1.6">
        <path d="M1 9.5L10 1L19 9.5" />
      </svg>
    </button>
    <button aria-label="Battery" className="ml-[14px]">
      <svg viewBox="0 0 25 18" className="w-[25px] h-[18px]" fill="none" stroke="white" strokeWidth="1.4">
        <path d="M9 4H23V16H5V13M24.3 8V12M2 0V4M6 0V4M0.7 4H8V8Q7 10 4 10Q1 10 0.7 8ZM4 10V14" />
        <rect x="7" y="9" width="4" height="6" fill="white" stroke="none" />
      </svg>
    </button>
    <button aria-label="Network" className="ml-[15px]">
      <svg viewBox="0 0 20 20" className="w-5 h-5" fill="none" stroke="white" strokeWidth="1.4">
        <path d="M1 19Q1 2 19 1" stroke="#9aa4b0" />
        <path d="M5.5 19Q6 7 19 6M10 19Q10.5 11.5 19 11" />
        <circle cx="17" cy="17" r="2" fill="white" stroke="none" />
      </svg>
    </button>
    <button aria-label="Volume" className="ml-[13px]">
      <svg viewBox="0 0 23 20" className="w-[23px] h-5" fill="none" stroke="white" strokeWidth="1.4">
        <path d="M1 7H5L10 2V18L5 13H1ZM13 7Q15 10 13 13M16 4.5Q19 10 16 15.5M19 2Q24 10 19 18" />
      </svg>
    </button>
    <button className="ml-4 pt-[2px] text-[16px]">ENG</button>
    <div className="flex flex-col justify-center items-center w-[94px] shrink-0 ml-5 pt-px text-[17px] leading-[28px] text-center">
      <time>08:34</time>
      <time>10/09/2022</time>
    </div>
    <button aria-label="Notifications" className="ml-7">
      <svg viewBox="0 0 24 26" className="w-6 h-[26px]" fill="none" stroke="white" strokeWidth="1.5">
        <path d="M11 24L7 20H1V1H23V14M17 24Q23 24 23 15Q24 25 17 25Q14 25 13 22Q18 23 18 16" />
      </svg>
    </button>
    <div className="w-[2px] shrink-0 ml-[30px] mr-[6px] bg-[#7d8696]" />
  </footer>
);

export default function App() {
  return (
    <div className="h-screen flex flex-col overflow-hidden bg-[#f3f2f1] font-['Noto_Sans','Open_Sans',sans-serif]">
      <TitleBar />
      <Ribbon />
      <div className="flex flex-1 min-h-0">
        <NavigationPane />
        <div className="w-[7px] shrink-0 bg-[#f0f0f2]" />
        <FormDesigner />
        <PropertySheet />
      </div>
      <StatusBar />
      <Taskbar />
    </div>
  );
}
